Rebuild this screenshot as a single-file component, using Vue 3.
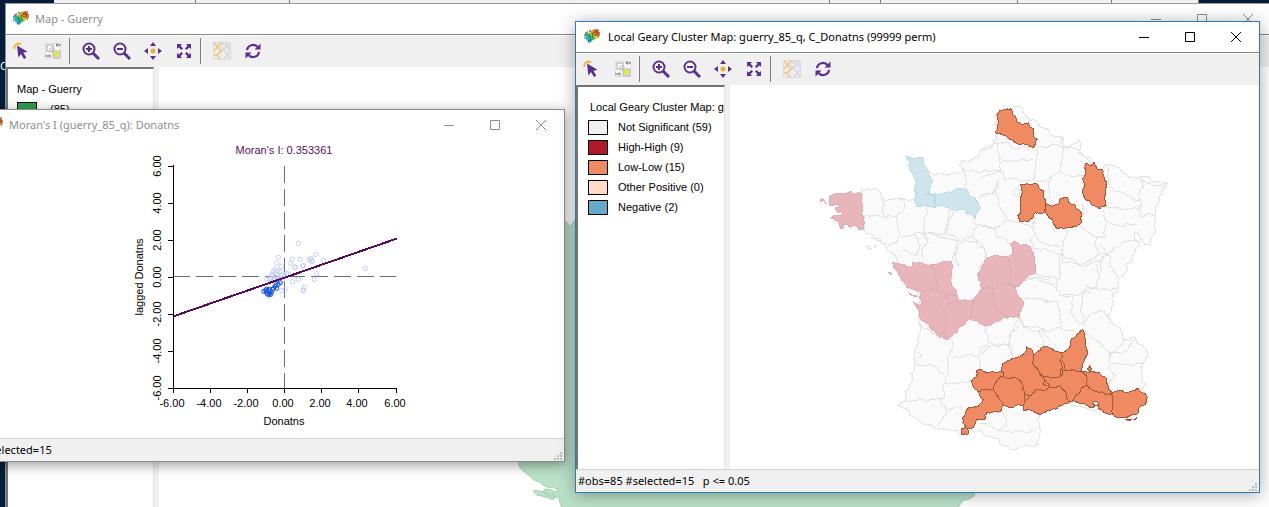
<script setup>
const tools = ['pointer', 'invert', '|', 'zoomin', 'zoomout', 'pan', 'extent', '|', 'basemap', 'refresh']
const toolNames = {
  pointer: 'Select', invert: 'Invert selection', zoomin: 'Zoom in', zoomout: 'Zoom out',
  pan: 'Pan', extent: 'Full extent', basemap: 'Base map', refresh: 'Refresh'
}
const captions = ['Minimize', 'Maximize', 'Close']
const legend = [
  { label: 'Not Significant (59)', kind: 'ns' },
  { label: 'High-High (9)', kind: 'hh' },
  { label: 'Low-Low (15)', kind: 'll' },
  { label: 'Other Positive (0)', kind: 'op' },
  { label: 'Negative (2)', kind: 'neg' }
]

const parse = (s) => s.trim().split(/\s+/).map((p) => p.split(',').map(Number))
const noise = (a, b) => {
  const v = Math.sin(a * 12.9898 + b * 78.233) * 43758.5453
  return (v - Math.floor(v)) * 2 - 1
}
// Adds small coastline-like wiggles between the vertices of a line.
// The result is the same in both directions, so neighbours share one border.
function subdivide(p, q, out) {
  const dx = q[0] - p[0]
  const dy = q[1] - p[1]
  if (Math.hypot(dx, dy) < 6) {
    out.push(q)
    return
  }
  const sign = p[0] < q[0] || (p[0] === q[0] && p[1] < q[1]) ? 1 : -1
  const k = noise(Math.round(p[0] + q[0]), Math.round(p[1] + q[1])) * 0.18 * sign
  const m = [(p[0] + q[0]) / 2 - dy * k, (p[1] + q[1]) / 2 + dx * k]
  subdivide(p, m, out)
  subdivide(m, q, out)
}
function trace(s, closed) {
  const pts = parse(s)
  const out = [pts[0]]
  for (let i = 1; i < pts.length; i++) subdivide(pts[i - 1], pts[i], out)
  if (closed) subdivide(pts[pts.length - 1], pts[0], out)
  return 'M' + out.map((p) => p[0].toFixed(1) + ' ' + p[1].toFixed(1)).join('L') + (closed ? 'Z' : '')
}
const area = (list) => list.map((s) => trace(s, true)).join('')
const lines = (list) => list.map((s) => trace(s, false)).join('')

const country = area(['183,298 225,292 240,305 255,330 275,328 300,322 320,328 345,325 345,300 342,260 335,235 318,198 340,205 370,203 378,230 385,245 430,250 470,248 490,235 478,225 485,210 540,185 575,170 582,150 592,145 588,130 590,70 600,62 630,55 645,48 662,47 668,65 678,78 690,95 700,85 712,95 720,110 745,118 755,135 785,138 788,165 805,172 830,160 835,150 842,165 840,185 860,200 870,215 885,218 890,232 905,235 925,222 960,235 985,260 1010,262 1030,258 1060,275 1103,278 1085,310 1075,340 1065,375 1063,430 1050,460 1035,462 1022,445 1015,430 1005,425 1003,440 1020,455 1005,485 980,520 978,545 955,565 955,600 935,625 933,665 925,682 945,705 962,710 970,750 1005,740 1015,760 1043,785 1032,815 1025,850 1038,882 1010,895 1030,900 1040,932 1020,950 1010,970 975,982 945,980 935,970 900,960 870,955 840,945 800,940 770,950 725,970 710,990 708,1060 718,1060 685,1065 655,1075 615,1065 600,1060 595,1045 540,1020 510,1020 485,1032 450,1020 410,1015 395,1005 340,980 320,955 295,945 315,930 330,880 345,820 350,770 358,695 355,675 350,650 365,630 350,600 325,595 305,565 278,517 295,517 288,500 262,480 258,465 240,455 225,440 200,430 190,415 160,405 125,400 130,370 125,340 155,310 183,308'])
const islands = area(['198,470 208,468 214,474 204,476', '222,464 228,466 226,470', '215,440 240,442 244,450 226,446'])

const bordersNW = lines([
  '187,308 188,375 193,415', '188,375 215,375 250,382 290,378', '240,305 255,340 248,360 265,385',
  '300,325 315,340 310,360 290,378 292,400 300,430 290,455 265,465', '375,345 383,370 375,425 335,435 300,438',
  '345,325 350,345 375,345 400,352 450,345', '450,345 445,400 432,430 375,425', '375,425 385,455 365,480 370,510',
  '365,435 375,430 430,440 475,450 465,490 455,512', '455,355 435,420 480,450 520,440 530,410 520,380',
  '490,235 497,260 495,300', '495,240 530,245 580,238 605,250', '535,325 575,310 595,290 600,262',
  '530,400 570,410 600,405', '520,440 550,470 560,510 535,530', '475,450 465,490 480,530'
])
const bordersNE = lines([
  '0,180 35,165 48,155 60,200 65,240 45,245 0,262', '40,155 100,175 160,165', '60,205 110,212 160,205',
  '165,165 170,200 165,240 165,275', '65,240 75,270 125,272 165,270', '175,170 250,170 245,210 238,245 215,260 170,275',
  '245,135 250,170 295,180', '238,245 300,255 318,250', '215,260 212,320 190,330', '295,185 330,200 340,215',
  '385,230 380,255 400,300 450,320 485,328', '480,260 490,290 480,300 485,340 480,380 500,370 525,378',
  '475,265 505,280 560,275', '370,345 420,355 485,345', '370,360 378,390 420,408 470,400', '305,340 310,375 300,400',
  '300,400 350,440 375,440 378,400', '350,440 355,490 300,525 255,500 250,460 262,415', '165,380 160,420 165,430 240,470',
  '165,475 200,475 245,490 240,550', '355,490 385,490 430,455 475,455', '385,490 360,520 355,560',
  '50,270 45,300 60,350 80,390 115,395', '45,310 0,320', '80,390 45,415 50,440 95,460', '45,415 0,405',
  '115,395 160,420', '165,430 150,450 165,475', '96,305 100,297 110,294 119,300 120,308 112,316 101,314 96,305'
])
const bordersSW = lines([
  '145,280 180,300 225,328 248,322', '245,330 250,350 232,385 235,420 232,430', '138,400 170,405 225,430',
  '140,365 155,378 140,385', '248,380 290,375 325,380 355,340 345,300 350,288', '325,380 328,420',
  '335,370 375,345 415,345 420,310 450,285', '355,335 385,350 418,340 425,375', '232,430 220,465 225,500 160,508 110,512',
  '232,460 270,455 300,450', '215,500 230,540 205,590', '230,540 280,530', '330,580 385,600 410,580 405,560 395,540',
  '385,600 440,600 500,595', '440,170 470,150 540,145', '460,205 500,205 540,220', '450,260 460,285 520,295 540,330',
  '95,60 140,75 150,45 130,10', '250,75 262,50 290,28 330,35 345,80'
])
const bordersSE = lines([
  '105,130 180,145 190,90 185,55', '190,95 250,108 300,90 325,70 300,40', '290,100 300,135 290,170 240,190 180,195',
  '180,145 170,160 180,195 210,200', '65,160 110,140 170,160', '70,205 120,205 175,215 180,275 190,290',
  '60,260 70,290 115,300 180,290 220,300', '215,195 210,250 235,280 250,275 240,235 245,190', '245,200 260,165 290,175 330,180 355,170',
  '250,285 265,260 300,240 325,262', '255,310 300,335 320,360 330,380 370,330', '325,395 330,370 380,360 410,325',
  '325,410 360,400 430,395', '325,410 345,435 330,450 325,480', '115,300 130,345', '60,265 30,310 25,350 40,380', '325,70 330,110 355,145'
])

const finistere = area([
  '183,308 186,320 183,335 188,350 185,370 193,380 193,395 190,415 178,418 172,408 160,405 150,410 142,402 130,402 130,412 122,413 118,405 118,395 105,388 90,380 100,376 120,375 130,370 122,364 113,366 112,360 105,358 108,350 118,352 116,343 105,340 90,345 88,335 90,325 88,320 100,312 118,308 130,308 140,310 150,302 153,303 156,310 165,312 172,308',
  '60,328 68,325 72,330 63,333', '75,336 79,338 76,339'
])
const normandy = area(['318,198 332,206 345,203 372,203 370,225 382,240 385,255 398,275 390,295 388,308 375,312 405,310 430,308 455,305 480,293 500,297 505,312 522,320 530,330 535,345 542,355 530,368 527,383 500,370 492,355 460,358 450,352 430,345 405,352 378,342 350,347 343,330 345,300 342,262 328,235 330,215'])
const normandyLine = lines(['375,312 395,312 405,320 403,335 405,350'])
const west = area([
  '68,95 85,100 110,107 125,112 128,97 150,95 165,102 195,102 215,95 243,92 248,110 248,170 260,190 265,212 300,210 325,190 335,178 335,155 325,150 322,135 335,110 345,90 380,75 415,80 428,60 422,40 440,35 450,45 475,45 485,60 493,80 497,110 495,130 465,145 455,160 438,168 440,190 455,205 460,225 450,245 445,262 425,258 400,262 370,280 345,287 325,270 308,270 300,262 270,290 262,305 245,318 230,328 205,318 185,298 165,275 150,258 140,230 155,215 148,200 155,185 130,175 110,170 95,150 85,125',
  '55,125 65,130 63,134', '117,187 140,195 143,200 120,192', '130,213 145,222 142,230'
])
const westLines = lines([
  '180,102 200,140 198,180 155,185', '198,180 225,190 260,190', '225,190 235,215 220,240 230,260 222,300 228,326',
  '235,220 265,213', '335,178 365,175 435,172', '365,175 370,210 385,240 425,258', '415,80 420,110 418,150 435,172', '300,262 310,240 310,205'
])
const north = area([
  '50,75 58,63 80,56 92,55 97,72 110,85 112,97 145,97 150,110 160,115 162,140 172,148 165,168 150,168 130,160 112,160 95,148 70,135 48,128 52,105',
  '123,282 140,280 168,278 178,295 192,302 197,330 195,365 165,367 160,382 145,393 120,393 113,375 122,365 120,335 125,310',
  '197,338 215,347 232,342 240,325 262,322 265,337 285,342 292,358 305,370 305,390 290,408 255,415 230,413 215,385 203,375 195,355',
  '318,218 330,225 342,215 350,235 368,238 372,260 380,290 375,315 378,345 360,355 335,343 315,325 307,300 315,285 308,265 318,245'
])
// The southern group is one outline with the inner borders drawn over it.
const south = area([
  '-70,420 -60,415 -40,428 5,420 8,400 40,385 60,380 80,350 92,355 100,375 107,368 130,348 150,352 180,365 205,355 225,320 248,297 255,310 258,350 248,400 243,420 262,425 285,425 315,440 325,475 335,490 375,485 415,473 437,490 440,512 420,530 412,550 375,562 345,558 337,550 308,540 290,520 270,532 240,520 208,515 160,535 125,550 95,540 70,540 70,525 40,530 10,525 -5,545 -40,545 -45,565 -70,568 -85,595 -98,595 -97,613 -115,612 -115,595 -102,588 -112,560 -90,530 -65,528 -50,508 -65,485 -87,455 -72,440',
  '262,415 270,405 275,417 268,422', '380,568 396,566 388,571', '400,568 410,560 406,566'
])
const southLines = lines([
  '5,420 10,437 -15,460 -20,478 -65,485', '10,437 40,440 68,465 75,490 70,525', '-20,478 -5,500 10,525',
  '75,490 90,497 110,478 130,480 150,470 180,465 200,500 208,515', '90,497 78,510', '100,375 107,410 118,428 135,450 145,460 150,470',
  '118,428 150,443 183,435 188,410 180,390 188,380 180,365', '188,390 195,420 243,420 258,435 258,465 235,490 208,515',
  '183,435 187,420 195,420', '135,450 130,462 140,466', '258,465 300,485 335,490 337,535 338,550'
])

const parentMap = area([
  '519,462 519,466 527,474 540,482 553,487 558,490 556,492 545,489 543,492 552,494 559,498 562,507 562,540 940,540 958,507 964,500 975,493 975,455 700,400 575,220 569,228 563,216 540,300',
  '533,491 540,491 547,495 555,496 554,499 542,496'
])

const ticks = ['-6.00', '-4.00', '-2.00', '0.00', '2.00', '4.00', '6.00'].map((label, i) => ({
  label, x: 173 + i * 37 + (i === 6 ? 1 : 0), y: 388 - i * 37
}))
const scatter = parse('475,310 527,343 550,361 676,385 415,352 410,370 457,358 481,358 452,370 465,382 488,378 490,377 512,355 508,360 516,364 530,401 523,418 475,418 458,425 493,442 490,452 490,450 435,448 425,452 424,380 405,388 412,393 398,403 440,400 445,402 420,395 400,395 380,418 392,415 405,410 415,412 425,405 430,412 410,420 395,408 388,418 403,418 418,418 428,420 413,405 516,362 466,381')
const picked = parse('371,454 378,456 382,462 387,465 390,460 395,455 385,452 380,447 398,448 405,440 400,445 410,445 415,433 421,428 388,448 393,463 377,450 408,435')
</script>

<template>
  <main class="desktop">
    <svg class="defs" aria-hidden="true">
      <defs>
        <linearGradient id="globe" x1="0" y1="1" x2="1" y2="0">
          <stop offset="0" stop-color="#2546d8" />
          <stop offset=".25" stop-color="#18b5e8" />
          <stop offset=".45" stop-color="#43b649" />
          <stop offset=".6" stop-color="#e8d32a" />
          <stop offset=".8" stop-color="#e0601c" />
          <stop offset="1" stop-color="#b8381a" />
        </linearGradient>
        <symbol id="geoda" viewBox="0 0 16 16">
          <path d="M1 5l4-1 3-3 5-1 2 3v4l-3 3-3 1-3 3-2-1-1-3-2-2z" fill="url(#globe)" />
          <path d="M0 6h1M1 4h2M0 9h1M2 10h1M5 2h2M14 1h1M15 4h1M15 6h1M14 8h1M4 12h1M3 3h1" stroke="#222" />
          <path d="M5 6l2 6M8 3l1 6" stroke="#126b55" stroke-width=".8" />
          <circle cx="11.500" cy="4.500" r="1.800" fill="none" stroke="#8d2f12" />
        </symbol>
        <symbol id="pointer" viewBox="0 0 18 18">
          <path d="M1.500 7A4.200 4.200 0 0 1 8 2.500" fill="none" stroke="#f4b73e" stroke-width="2" />
          <path d="M4 3.500l10.500 6.300-4.200.9 3 5-2.300 1.400-3-5-2.600 3.300z" fill="#5c2d91" />
        </symbol>
        <symbol id="invert" viewBox="0 0 18 18">
          <rect x="1.500" y="1.500" width="15" height="15" fill="#f6f6f6" stroke="#d3d3d3" stroke-dasharray="2 1" />
          <rect x="3" y="3" width="6" height="6" fill="#fff" stroke="#aaa" />
          <path d="M6 6h4v4H6z" fill="none" stroke="#bbb" />
          <path d="M9 9h7v7H9z" fill="#d8d8d8" stroke="#bbb" />
          <path d="M10 10l4-1 1 3-2 3-3-1z" fill="#e7ea2c" />
          <path d="M12 3h5M12 3l1.500-1.500M12 3l1.500 1.500M1 14h5M5 12.500L6.500 14 5 15.500" fill="none" stroke="#6d6a75" />
        </symbol>
        <symbol id="zoomin" viewBox="0 0 18 18">
          <circle cx="7" cy="7" r="5.500" fill="#fff" stroke="#5c2d91" stroke-width="2" />
          <path d="M11 11l6 6" stroke="#5c2d91" stroke-width="3" />
          <path d="M4 7h6M7 4v6" stroke="#5c2d91" stroke-width="2" />
        </symbol>
        <symbol id="zoomout" viewBox="0 0 18 18">
          <circle cx="7" cy="7" r="5.500" fill="#fff" stroke="#5c2d91" stroke-width="2" />
          <path d="M11 11l6 6" stroke="#5c2d91" stroke-width="3" />
          <path d="M4 7h6" stroke="#5c2d91" stroke-width="2" />
        </symbol>
        <symbol id="pan" viewBox="0 0 18 18">
          <path d="M9 0l3 4H6zM9 18l3-4H6zM0 9l4-3v6zM18 9l-4-3v6z" fill="#5c2d91" />
          <circle cx="9" cy="9" r="2.500" fill="#f0ae2e" />
        </symbol>
        <symbol id="extent" viewBox="0 0 18 18">
          <path d="M2 2h5L5.500 3.700 8 6.500 6.500 8 3.700 5.500 2 7zM16 2v5l-1.700-1.500L11.500 8 10 6.500l2.500-2.800L11 2zM2 16v-5l1.700 1.500L6.500 10 8 11.500l-2.500 2.800L7 16zM16 16h-5l1.500-1.700-2.500-2.800 1.500-1.500 2.800 2.500L16 11z" fill="#5c2d91" />
        </symbol>
        <symbol id="basemap" viewBox="0 0 18 18">
          <rect x=".5" y=".5" width="17" height="17" rx="1" fill="#ececec" stroke="#dadade" />
          <path d="M9 1l8 7M17 1L6 12M8 5l9 11M17 10l-6 7M12 1l5 4" fill="none" stroke="#c9c9d4" />
          <path d="M1 1l4 4M9 0L1 9M5 5l3 4-4 4 3 4M1 13l3 0" fill="none" stroke="#f1c57c" stroke-width="1.500" />
        </symbol>
        <symbol id="refresh" viewBox="0 0 18 18">
          <path d="M3 8.200A6 6 0 0 1 13.500 5M15 9.800A6 6 0 0 1 4.500 13" fill="none" stroke="#5c2d91" stroke-width="2.200" />
          <path d="M16.500 1.500v6h-6zM1.500 16.500v-6h6z" fill="#5c2d91" />
        </symbol>
        <symbol id="Minimize" viewBox="0 0 12 12"><path d="M1 6.500h10" stroke="currentColor" /></symbol>
        <symbol id="Maximize" viewBox="0 0 12 12"><path d="M1.500 1.500h9v9h-9z" fill="none" stroke="currentColor" /></symbol>
        <symbol id="Close" viewBox="0 0 12 12"><path d="M1 1l10 10M11 1L1 11" stroke="currentColor" /></symbol>
        <symbol id="grip" viewBox="0 0 9 9">
          <path d="M6 0h2v2H6zM3 3h2v2H3zM6 3h2v2H6zM0 6h2v2H0zM3 6h2v2H3zM6 6h2v2H6z" fill="#bdbdbd" />
        </symbol>
      </defs>
    </svg>

    <div class="sheet"><i></i><i></i><i></i><i></i><i></i><i></i><i></i></div>
    <span class="shortcut">C</span>

    <section class="window parent">
      <header class="titlebar">
        <svg class="appicon"><use href="#geoda" /></svg>
        <h2>Map - Guerry</h2>
        <button v-for="c in captions" :key="c" type="button" class="caption" :aria-label="c"><svg><use :href="'#' + c" /></svg></button>
      </header>
      <nav class="toolbar">
        <template v-for="(t, i) in tools" :key="i">
          <span v-if="t === '|'" class="sep"></span>
          <button v-else type="button" class="tool" :aria-label="toolNames[t]"><svg><use :href="'#' + t" /></svg></button>
        </template>
      </nav>
      <div class="body">
        <aside class="legend">
          <h3>Map - Guerry</h3>
          <ul><li><span class="swatch all"></span>(85)</li></ul>
        </aside>
        <div class="canvas"></div>
      </div>
      <svg class="backdrop" viewBox="159 67 1110 440" preserveAspectRatio="xMinYMin slice">
        <path :d="parentMap" />
      </svg>
    </section>

    <section class="window moran">
      <header class="titlebar">
        <svg class="appicon"><use href="#geoda" /></svg>
        <h2>Moran's I (guerry_85_q): Donatns</h2>
        <button v-for="c in captions" :key="c" type="button" class="caption" :aria-label="c"><svg><use :href="'#' + c" /></svg></button>
      </header>
      <svg class="plot" viewBox="-23 140 587 298">
        <text class="heading" x="284" y="154">Moran's I: 0.353361</text>
        <g class="dashed">
          <path d="M284.500 166V388" />
          <path d="M173 276.500H396" />
        </g>
        <g class="points">
          <circle v-for="(p, i) in scatter" :key="i" :cx="140 + p[0] / 3" :cy="140 + p[1] / 3" r="2.200" />
        </g>
        <g class="points chosen">
          <circle v-for="(p, i) in picked" :key="i" :cx="140 + p[0] / 3" :cy="140 + p[1] / 3" r="2" />
        </g>
        <path class="fit" d="M173 316.500L397 238.500" />
        <path class="axis" d="M173.500 165V388.500H396.500" />
        <g v-for="t in ticks" :key="t.label">
          <path class="axis" :d="`M168 ${t.y + 0.5}h5M${t.x + 0.5} 388v5`" />
          <text :x="t.x - 1" y="407">{{ t.label }}</text>
          <text :transform="`translate(161 ${t.y}) rotate(-90)`">{{ t.label }}</text>
        </g>
        <text x="284" y="425">Donatns</text>
        <text transform="translate(143 277) rotate(-90)">lagged Donatns</text>
      </svg>
      <footer class="status"><span>#selected=15</span><svg class="grip"><use href="#grip" /></svg></footer>
    </section>

    <section class="window geary">
      <header class="titlebar">
        <svg class="appicon"><use href="#geoda" /></svg>
        <h2>Local Geary Cluster Map: guerry_85_q, C_Donatns (99999 perm)</h2>
        <button v-for="c in captions" :key="c" type="button" class="caption" :aria-label="c"><svg><use :href="'#' + c" /></svg></button>
      </header>
      <nav class="toolbar">
        <template v-for="(t, i) in tools" :key="i">
          <span v-if="t === '|'" class="sep"></span>
          <button v-else type="button" class="tool" :aria-label="toolNames[t]"><svg><use :href="'#' + t" /></svg></button>
        </template>
      </nav>
      <div class="body">
        <aside class="legend">
          <h3>Local Geary Cluster Map: guerry_85_q</h3>
          <ul>
            <li v-for="l in legend" :key="l.kind"><span class="swatch" :class="l.kind"></span>{{ l.label }}</li>
          </ul>
        </aside>
        <div class="canvas">
          <svg class="map" viewBox="730 85 529 383" role="img" aria-label="Local Geary cluster map of France">
            <g transform="translate(800 90) scale(.33333)">
              <path class="land" :d="country" /><path class="land" :d="islands" /><path class="edge" :d="bordersNW" />
            </g>
            <g transform="translate(980 90) scale(.33333)"><path class="edge" :d="bordersNE" /></g>
            <g transform="translate(870 230) scale(.33333)"><path class="edge" :d="bordersSW" /></g>
            <g transform="translate(1000 230) scale(.33333)"><path class="edge" :d="bordersSE" /></g>
            <g transform="translate(800 90) scale(.33333)">
              <path class="high" :d="finistere" /><path class="negative" :d="normandy" /><path class="negative-line" :d="normandyLine" />
            </g>
            <g transform="translate(870 230) scale(.33333)">
              <path class="high" :d="west" /><path class="high-line" :d="westLines" />
            </g>
            <g transform="translate(980 90) scale(.33333)"><path class="low" :d="north" /></g>
            <g transform="translate(1000 230) scale(.33333)">
              <path class="low" :d="south" /><path class="low-line" :d="southLines" />
              <path class="lagoon" d="M278 515l10-3 8 8-8 5-8-4z" />
            </g>
          </svg>
        </div>
      </div>
      <footer class="status"><span>#obs=85 #selected=15&nbsp;&nbsp; p &lt;= 0.05</span><svg class="grip"><use href="#grip" /></svg></footer>
    </section>
  </main>
</template>

<style>
body { background: #061c3a; }
</style>

<style scoped>
.desktop {
  position: relative;
  height: 100vh;
  overflow: hidden;
  background: #061c3a;
  font-family: "Noto Sans", "Open Sans", sans-serif;
  font-size: 11px;
  color: #000;
}
.defs { position: absolute; width: 0; height: 0; }
.sheet {
  display: grid;
  grid-template-columns: 142px 94px 540px 51px 137px 94px 87px;
  height: 4px;
  margin-left: 54px;
}
.sheet i { background: #f0f0f0; border-right: 1px solid #777; box-sizing: border-box; }
.shortcut { position: absolute; left: 0; top: 58px; color: #fff; font-size: 11px; }
.window {
  position: absolute;
  display: flex;
  flex-direction: column;
  box-sizing: border-box;
  background: #fff;
}
.parent { left: 5px; right: -2px; top: 3px; bottom: 0; border-top: 1px solid #999; border-left: 1px solid #8a8f98; }
.moran { left: -24px; width: 589px; top: 109px; height: 353px; border: 1px solid #8c8c8c; box-shadow: 0 3px 12px rgba(0, 0, 0, .4); }
.geary { left: 575px; right: 9px; top: 21px; bottom: 14px; border: 1px solid #2a7ab8; box-shadow: 0 2px 16px rgba(0, 0, 0, .34); }

.titlebar { display: flex; align-items: center; height: 30px; flex: none; padding-left: 8px; }
.parent .titlebar, .moran .titlebar { color: #8e8e8e; }
.parent .titlebar { padding-left: 7px; }
.moran .titlebar { padding-left: 10px; }
.appicon { width: 16px; height: 16px; flex: none; }
h2 { flex: 1; margin: 0 0 0 8px; font-size: 11px; font-weight: 400; line-height: 20px; white-space: nowrap; overflow: hidden; }
.parent h2, .moran h2 { margin-left: 6px; }
.caption, .tool { display: flex; align-items: center; justify-content: center; padding: 0; border: 0; background: none; color: inherit; flex: none; }
.caption { width: 46px; height: 30px; }
.caption svg { width: 12px; height: 12px; }
.toolbar { display: flex; align-items: center; flex: none; height: 32px; border-top: 1px solid #858585; background: #f0f0f0; box-shadow: inset 0 1px #fff; }
.tool { width: 31px; height: 30px; }
.tool svg { width: 18px; height: 18px; }
.sep { width: 1px; height: 26px; margin: 0 5px 0 1px; background: #7e7e7e; }

.body { display: flex; flex: 1; min-height: 0; }
.legend {
  width: 149px;
  box-sizing: border-box;
  border-top: 2px solid #747474;
  border-left: 2px solid #747474;
  border-right: 1px solid #e2e2e2;
  overflow: hidden;
  flex: none;
  font-family: "Liberation Sans", Arial, sans-serif;
  font-size: 11px;
}
.parent .legend { width: 148px; }
.legend h3 { margin: 12px 0 2px 12px; font-size: 11px; font-weight: 400; line-height: 16px; white-space: nowrap; }
.parent .legend h3 { margin-left: 9px; }
.legend ul { list-style: none; margin: 0; padding: 0 0 0 10px; }
.parent .legend ul { padding-left: 9px; }
.legend li { display: flex; align-items: center; height: 20px; gap: 10px; white-space: nowrap; }
.parent .legend li { gap: 13px; }
.swatch { width: 20px; height: 15px; box-sizing: border-box; border: 1px solid #000; }
.all { background: #2f9e4f; }
.ns { background: #f0f0f0; }
.hh { background: #b2182b; }
.ll { background: #ef8a62; }
.op { background: #fddbc7; }
.neg { background: #67a9c9; }
.canvas { flex: 1; min-width: 0; border-left: 5px solid #f0f0f0; background: #fff; }
.map { display: block; width: 100%; height: 100%; }
.map path { vector-effect: non-scaling-stroke; stroke-width: 1px; shape-rendering: crispEdges; }
.land { fill: #fafafa; stroke: #e2e2e2; }
.edge { fill: none; stroke: #e2e2e2; }
.high { fill: #e8b5bb; stroke: #e0adb6; }
.high-line { fill: none; stroke: #d9a9b4; }
.negative { fill: #cfe5ee; stroke: #bfdbe6; }
.negative-line { fill: none; stroke: #b4d2de; }
.low { fill: #ef8a62; stroke: #a35a3c; }
.low-line { fill: none; stroke: #a35a3c; }
.lagoon { fill: #fff; stroke: #a35a3c; }
.backdrop { position: absolute; left: 153px; top: 63px; width: 1110px; height: calc(100% - 63px); }
.backdrop path { fill: #bae2c9; stroke: #a5ceb5; }

.plot { display: block; flex: 1; min-height: 0; width: 100%; font-family: "Liberation Sans", Arial, sans-serif; font-size: 11px; }
.plot text { text-anchor: middle; fill: #000; }
.plot .heading { fill: #5a0c66; }
.axis { fill: none; stroke: #000; shape-rendering: crispEdges; }
.dashed path { stroke: #6e6e6e; stroke-dasharray: 17 6; shape-rendering: crispEdges; }
.fit { stroke: #520a5a; stroke-width: 2; shape-rendering: crispEdges; }
.points { fill: none; stroke: #c3cff4; }
.chosen { stroke: #0f4ee0; }

.status { display: flex; align-items: center; flex: none; height: 22px; background: #f0f0f0; border-top: 1px solid #d4d4d4; padding-left: 2px; }
.moran .status { padding-left: 6px; }
.status span { flex: 1; line-height: 18px; }
.grip { width: 9px; height: 9px; align-self: flex-end; margin-right: 1px; }
</style>
